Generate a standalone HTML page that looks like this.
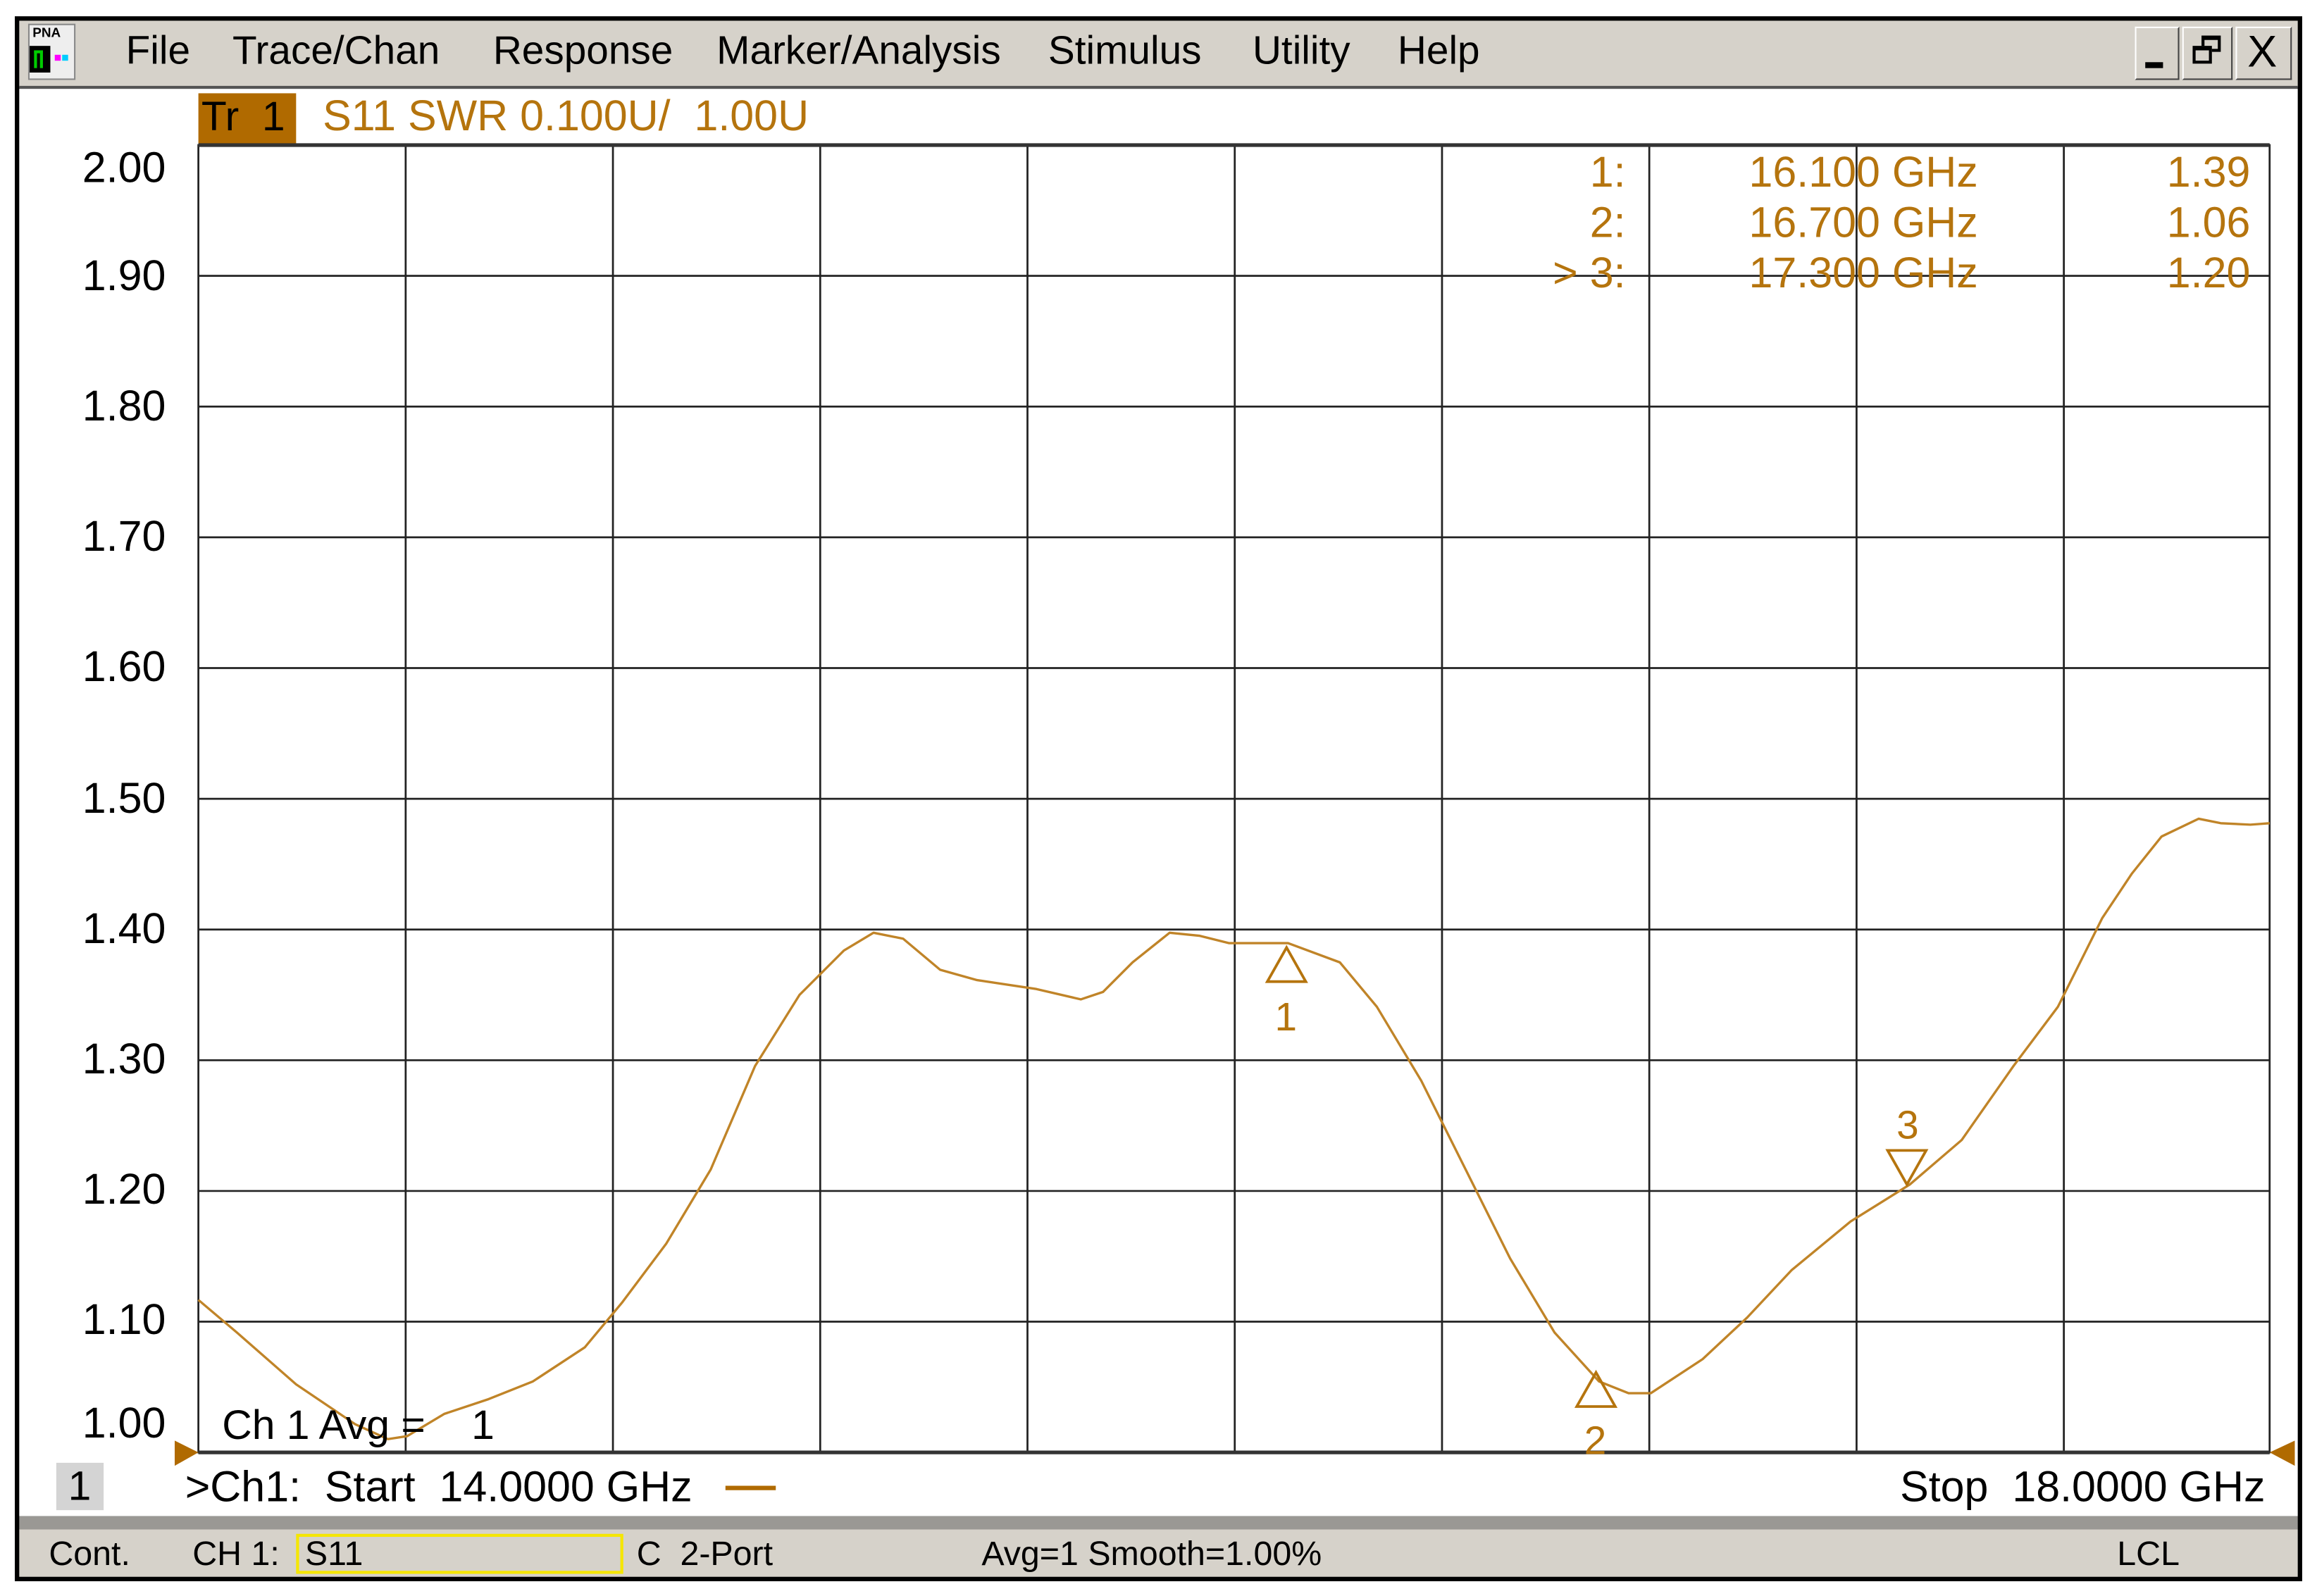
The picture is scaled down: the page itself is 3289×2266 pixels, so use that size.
<!DOCTYPE html>
<html><head><meta charset="utf-8"><style>
html,body{margin:0;padding:0;background:#fff;overflow:hidden}
body{width:3289px;height:2266px;position:relative}
#s{position:absolute;left:0;top:0;width:1565px;height:1078px;transform:scale(2.1016,2.1021);transform-origin:0 0;font-family:"Liberation Sans",sans-serif}
.a{position:absolute;white-space:pre}
.m{font-size:27px;color:#000;top:19px}
.o{color:#b5740d}
.yl{font-size:29px;right:1453px;width:90px;text-align:right}
.mt{font-size:29px}
</style></head><body><div id="s">
<div class="a" style="left:10px;top:11px;width:1545px;height:1057px;background:#000"></div>
<div class="a" style="left:13px;top:14px;width:1539px;height:45px;background:#d6d2ca"></div>
<div class="a" style="left:13px;top:58px;width:1539px;height:2px;background:#555"></div>
<div class="a" style="left:13px;top:60px;width:1539px;height:964px;background:#fff"></div>
<div class="a" style="left:13px;top:1024px;width:1539px;height:9px;background:#9a9894"></div>
<div class="a" style="left:13px;top:1033px;width:1539px;height:32px;background:#d6d2ca"></div>
<div class="a" style="left:19px;top:16px;width:32px;height:38px;background:#eee;border:1px solid #888;box-sizing:border-box"></div>
<div class="a" style="left:22px;top:17px;font-size:9px;font-weight:bold">PNA</div>
<div class="a" style="left:20px;top:31px;width:14px;height:18px;background:#000"></div>
<div class="a" style="left:23px;top:34px;width:6px;height:12px;border:2px solid #0c0;border-bottom:none;box-sizing:border-box"></div>
<div class="a" style="left:37px;top:37px;width:4px;height:4px;background:#f0f"></div>
<div class="a" style="left:42px;top:37px;width:4px;height:4px;background:#0cf"></div>
<div class="a m" style="left:85px">File</div>
<div class="a m" style="left:157px">Trace/Chan</div>
<div class="a m" style="left:333px">Response</div>
<div class="a m" style="left:484px">Marker/Analysis</div>
<div class="a m" style="left:708px">Stimulus</div>
<div class="a m" style="left:846px">Utility</div>
<div class="a m" style="left:944px">Help</div>
<div class="a" style="left:1442px;top:18px;width:30px;height:36px;background:#d6d2ca;border:1px solid #fff;border-right-color:#444;border-bottom-color:#444;box-sizing:border-box"></div>
<div class="a" style="left:1449px;top:42px;width:12px;height:4px;background:#000"></div>
<div class="a" style="left:1474px;top:18px;width:34px;height:36px;background:#d6d2ca;border:1px solid #fff;border-right-color:#444;border-bottom-color:#444;box-sizing:border-box"></div>
<div class="a" style="left:1487px;top:24px;width:13px;height:11px;border:2px solid #000;border-top-width:3px;box-sizing:border-box"></div>
<div class="a" style="left:1481px;top:31px;width:13px;height:12px;border:2px solid #000;border-top-width:3px;box-sizing:border-box;background:#d6d2ca"></div>
<div class="a" style="left:1510px;top:18px;width:38px;height:36px;background:#d6d2ca;border:1px solid #fff;border-right-color:#444;border-bottom-color:#444;box-sizing:border-box"></div>
<div class="a" style="left:1518px;top:19px;font-size:30px">X</div>
<div class="a" style="left:134px;top:63px;width:66px;height:34px;background:#b06a00"></div>
<div class="a" style="left:136px;top:63px;font-size:28px;color:#000">Tr  1</div>
<div class="a o" style="left:218px;top:63px;font-size:29px">S11 SWR 0.100U/  1.00U</div>
<div class="a yl" style="top:98px">2.00</div>
<div class="a yl" style="top:171px">1.90</div>
<div class="a yl" style="top:259px">1.80</div>
<div class="a yl" style="top:347px">1.70</div>
<div class="a yl" style="top:435px">1.60</div>
<div class="a yl" style="top:524px">1.50</div>
<div class="a yl" style="top:612px">1.40</div>
<div class="a yl" style="top:700px">1.30</div>
<div class="a yl" style="top:788px">1.20</div>
<div class="a yl" style="top:876px">1.10</div>
<div class="a yl" style="top:946px">1.00</div>
<svg class="a" style="left:0;top:0" width="1565" height="1078">
<g stroke="#222" stroke-width="1.3" fill="none">
<rect x="134" y="98" width="1399" height="883"/>
<path d="M274 98V981M414 98V981M554 98V981M694 98V981M834 98V981M974 98V981M1114 98V981M1254 98V981M1394 98V981"/>
<path d="M134 186.3H1533M134 274.6H1533M134 362.9H1533M134 451.2H1533M134 539.5H1533M134 627.8H1533M134 716.1H1533M134 804.4H1533M134 892.7H1533"/>
</g>
<path d="M134 98H1533M134 981H1533" stroke="#333" stroke-width="2.5"/>
<polyline fill="none" stroke="#c08428" stroke-width="1.6" stroke-linejoin="round" points="134,878 160,900 200,935 240,962 262,972 275,970 300,955 330,945 360,933 395,910 420,880 450,840 480,790 510,720 540,672 570,642 590,630 610,634 635,655 660,662 700,668 730,675 745,670 765,650 790,630 810,632 830,637 870,637 905,650 930,680 960,730 990,790 1020,850 1050,900 1080,933 1100,941 1115,941 1150,918 1180,890 1210,858 1250,825 1290,800 1325,770 1360,720 1390,680 1420,620 1440,590 1460,565 1485,553 1500,556 1520,557 1533,556"/>
<g fill="none" stroke="#b5740d" stroke-width="1.8">
<path d="M869 640L856 663H882Z"/>
<path d="M1078 927L1065 950H1091Z"/>
<path d="M1288 800L1275 777H1301Z"/>
</g>
<path d="M118 973L134 981L118 990Z" fill="#b06a00"/>
<path d="M1550 973L1533 981L1550 990Z" fill="#b06a00"/>
<path d="M490 1005H524" stroke="#b06a00" stroke-width="3"/>
</svg>
<div class="a o" style="left:861px;top:672px;font-size:27px">1</div>
<div class="a o" style="left:1070px;top:958px;font-size:27px">2</div>
<div class="a o" style="left:1281px;top:745px;font-size:27px">3</div>
<div class="a o mt" style="left:1020px;top:101px;width:78px;text-align:right">1:</div>
<div class="a o mt" style="left:1020px;top:135px;width:78px;text-align:right">2:</div>
<div class="a o mt" style="left:1020px;top:169px;width:78px;text-align:right">&gt; 3:</div>
<div class="a o mt" style="left:1130px;top:101px;width:206px;text-align:right">16.100 GHz</div>
<div class="a o mt" style="left:1130px;top:135px;width:206px;text-align:right">16.700 GHz</div>
<div class="a o mt" style="left:1130px;top:169px;width:206px;text-align:right">17.300 GHz</div>
<div class="a o mt" style="left:1400px;top:101px;width:120px;text-align:right">1.39</div>
<div class="a o mt" style="left:1400px;top:135px;width:120px;text-align:right">1.06</div>
<div class="a o mt" style="left:1400px;top:169px;width:120px;text-align:right">1.20</div>
<div class="a" style="left:150px;top:947px;font-size:28px">Ch 1 Avg =    1</div>
<div class="a" style="left:38px;top:988px;width:32px;height:32px;background:#d4d4d4"></div>
<div class="a" style="left:46px;top:988px;font-size:28px">1</div>
<div class="a" style="left:125px;top:989px;font-size:29px">&gt;Ch1:  Start  14.0000 GHz</div>
<div class="a" style="left:1180px;top:989px;width:350px;text-align:right;font-size:29px">Stop  18.0000 GHz</div>
<div class="a" style="left:33px;top:1036px;font-size:23px">Cont.</div>
<div class="a" style="left:130px;top:1036px;font-size:23px">CH 1:</div>
<div class="a" style="left:200px;top:1036px;width:221px;height:27px;border:2px solid #f5e600;box-sizing:border-box"></div>
<div class="a" style="left:206px;top:1036px;font-size:23px">S11</div>
<div class="a" style="left:430px;top:1036px;font-size:23px">C  2-Port</div>
<div class="a" style="left:663px;top:1036px;font-size:23px">Avg=1 Smooth=1.00%</div>
<div class="a" style="left:1430px;top:1036px;font-size:23px">LCL</div>
</div></body></html>
